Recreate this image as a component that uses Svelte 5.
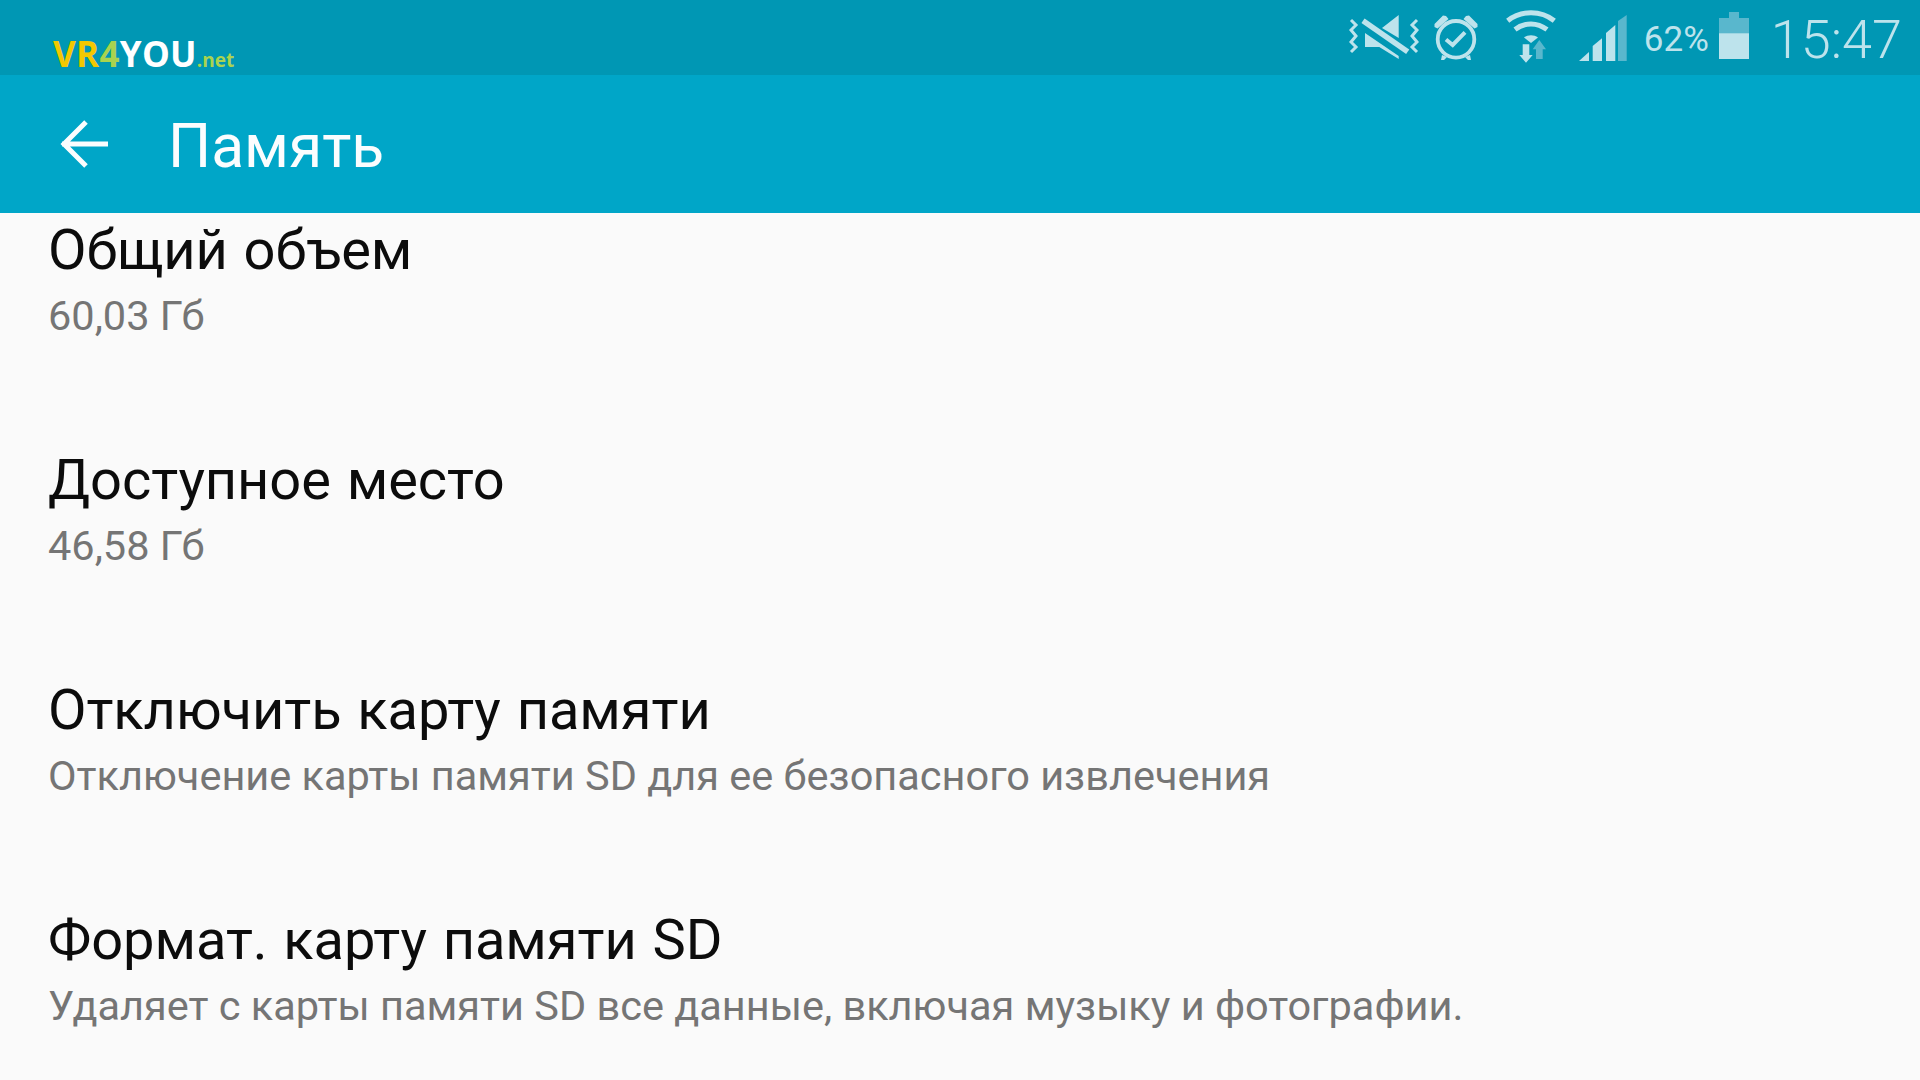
<script>
  const rows = [
    { title: 'Общий объем', sub: '60,03 Гб' },
    { title: 'Доступное место', sub: '46,58 Гб' },
    { title: 'Отключить карту памяти', sub: 'Отключение карты памяти SD для ее безопасного извлечения' },
    { title: 'Формат. карту памяти SD', sub: 'Удаляет с карты памяти SD все данные, включая музыку и фотографии.' }
  ]
</script>

<div class="screen">
  <header class="status">
    <div class="logo"><span class="y">VR</span><span class="g">4</span><span class="w">YOU</span><span class="g small">.net</span></div>
    <div class="icons">
      <svg class="ic-mute" width="70" height="45" viewBox="0 0 70 45">
        <path d="M2 5l5 5-5 5 5 6-5 6 5 5-5 5M68 5l-5 5 5 5-5 6 5 6-5 5 5 5" fill="none" stroke="#bde3ec" stroke-width="3"/>
        <path d="M33 13L49.700 0V23zM16 18L49.700 41V44L30.300 32H16z" fill="#bde3ec"/>
        <path d="M14 5.700L58.700 36.700" fill="none" stroke="#bde3ec" stroke-width="5.500"/>
      </svg>
      <svg class="ic-alarm" width="44" height="47" viewBox="0 0 44 47">
        <circle cx="22" cy="25.300" r="18.300" fill="none" stroke="#bde3ec" stroke-width="3.800"/>
        <path d="M0.500 10L9 1.500l3 0.500 2.500 3L3.500 14.500 0.500 13zM43.500 10L35 1.500l-3 0.500-2.500 3 11 9.500 3-1.500z" fill="#bde3ec"/>
        <path d="M12 25.500l6.700 5.500L31 18.300" fill="none" stroke="#bde3ec" stroke-width="4"/>
        <path d="M8 41l-1 5h3l3-3zM36 41l1 5h-3l-3-3z" fill="#bde3ec"/>
      </svg>
      <svg class="ic-wifi" width="50" height="53" viewBox="0 0 50 53">
        <path d="M1.700 10.700C15 0 35 0 48.300 10.700" fill="none" stroke="#bde3ec" stroke-width="5"/>
        <path d="M9 19.500C19 12 31 12 41 19.500" fill="none" stroke="#bde3ec" stroke-width="5"/>
        <path d="M18 27.500C22 24.500 28 24.500 32 27.500L25 33z" fill="#bde3ec"/>
        <path d="M16.700 34.300H23.300V45H26.700L20 52.700 13.300 45H16.700z" fill="#bde3ec"/>
        <path d="M30 49V39.300H26.700L33.300 30 40 39.300H36.700V49z" fill="#59b7cd"/>
      </svg>
      <svg class="ic-signal" width="48" height="46" viewBox="0 0 48 46">
        <path d="M0 46L10 37V46z" fill="#bde3ec"/>
        <path d="M13.700 46H23V23.300L13.700 31z" fill="#bde3ec"/>
        <path d="M27 46H36.300V10L27 18z" fill="#bde3ec"/>
        <path d="M39 46H47.700V0L39 6z" fill="#59b7cd"/>
      </svg>
      <span class="pct">62%</span>
      <svg class="ic-batt" width="30" height="47" viewBox="0 0 30 47">
        <path d="M10 0h10v6h10v41H0V6h10z" fill="#59b7cd"/>
        <rect y="21.300" width="30" height="25.700" fill="#bde3ec"/>
      </svg>
      <span class="clock">15:47</span>
    </div>
  </header>

  <div class="toolbar">
    <svg class="back" width="48" height="48" viewBox="0 0 48 48">
      <path d="M2 24H48M26 2L4 24l22 22" fill="none" stroke="#fbfdfe" stroke-width="5"/>
    </svg>
    <h1>Память</h1>
  </div>

  <ul class="list">
    {#each rows as row}
      <li>
        <div class="title">{row.title}</div>
        <div class="sub">{row.sub}</div>
      </li>
    {/each}
  </ul>
</div>

<style>
  :global(body) { margin: 0; background: #fafafa; }
  .screen {
    width: 1920px;
    height: 1080px;
    overflow: hidden;
    font-family: Roboto, sans-serif;
    background: #fafafa;
  }
  .status {
    height: 75px;
    background: #0097b4;
    display: flex;
    justify-content: space-between;
    align-items: flex-start;
    padding: 0 18px 0 53px;
    box-sizing: border-box;
  }
  .logo {
    font-family: "Open Sans", sans-serif;
    font-weight: 700;
    font-size: 35px;
    line-height: 1;
    margin-top: 36px;
    display: flex;
    align-items: baseline;
    letter-spacing: 0.300px;
  }
  .y { color: #f3c800; }
  .g { color: #a9d34f; }
  .w { color: #fff; }
  .small { font-size: 19px; letter-spacing: 0; }
  .icons { display: flex; align-items: flex-start; color: #bde3ec; }
  .ic-mute { margin-top: 15px; }
  .ic-alarm { margin: 14px 0 0 15px; }
  .ic-wifi { margin: 10px 0 0 28px; }
  .ic-signal { margin: 15px 0 0 23px; }
  .pct { font-size: 35px; line-height: 1; margin: 22px 0 0 17px; }
  .ic-batt { margin: 12px 0 0 10px; }
  .clock { font-size: 54px; font-weight: 300; line-height: 1; margin: 13px 0 0 22px; }
  .toolbar {
    height: 138px;
    background: #00a6c8;
    display: flex;
    align-items: center;
    color: #fbfdfe;
  }
  .back { margin-left: 60px; }
  h1 {
    margin: 6px 0 0 60px;
    font-size: 60.500px;
    font-weight: 400;
    line-height: 1;
  }
  .list { list-style: none; margin: 2px 0 0; padding: 0 0 0 48px; }
  li { height: 230px; box-sizing: border-box; }
  .title { font-size: 56px; line-height: 70px; color: #0c0c0c; word-spacing: 2px; letter-spacing: -0.050px; }
  .sub { font-size: 41.500px; line-height: 62px; color: #757575; }
</style>
